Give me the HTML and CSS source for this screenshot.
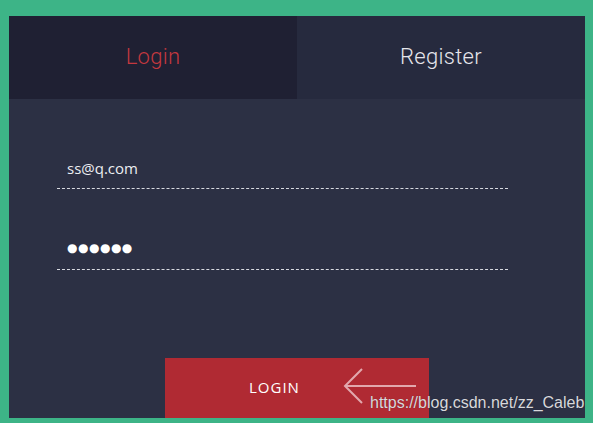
FILE: index.html
```html
<!DOCTYPE html>
<html>
<head>
<meta charset="utf-8">
<link rel="stylesheet" href="styles.css">
</head>
<body>
<div class="panel">
  <div class="tabs">
    <div class="tab tab-active">Login</div>
    <div class="tab">Register</div>
  </div>
  <div class="form">
    <div class="field"><span class="value">ss@q.com</span></div>
    <div class="field field-pass"><span class="dots">●●●●●●</span></div>
    <div class="actions">
      <div class="btn">LOGIN</div>
      <svg class="arrow" width="80" height="40" viewBox="0 0 80 40">
        <path d="M74 20 H3 M20 3 L3 20 L20 37" fill="none" stroke="rgba(235,190,195,0.85)" stroke-width="2"/>
      </svg>
      <div class="watermark">https://blog.csdn.net/zz_Caleb</div>
    </div>
  </div>
</div>
</body>
</html>
```
FILE: styles.css
```css
html, body { margin: 0; padding: 0; }
body {
  width: 593px;
  height: 423px;
  background: #3db487;
  overflow: hidden;
  padding: 16px 0 0 9px;
  box-sizing: border-box;
}
.panel {
  width: 576px;
  height: 402px;
  background: #2c3044;
  display: flex;
  flex-direction: column;
  overflow: hidden;
}
.tabs {
  display: flex;
  flex: 0 0 83px;
}
.tab {
  flex: 0 0 288px;
  display: flex;
  align-items: center;
  justify-content: center;
  background: #262a3e;
  color: #e6e6ec;
  font-family: Roboto, sans-serif;
  font-weight: 300;
  font-size: 22px;
  letter-spacing: 0.3px;
  padding-bottom: 2px;
  box-sizing: border-box;
}
.tab-active {
  background: #1f2033;
  color: #c4383f;
}
.form {
  position: relative;
  flex: 1;
  padding: 0 77px 0 48px;
}
.field {
  height: 28px;
  border-bottom: 1px dashed #d8dae0;
  padding-left: 10px;
  margin-top: 61px;
  font-family: "Open Sans", sans-serif;
  font-size: 15px;
  color: #eceef2;
  line-height: 16px;
}
.field-pass {
  height: 31px;
  margin-top: 49px;
}
.dots {
  font-family: "DejaVu Sans", sans-serif;
  font-size: 12px;
  letter-spacing: 0.5px;
  color: #fff;
}
.actions {
  position: relative;
  margin-top: 88px;
  margin-left: 108px;
}
.btn {
  width: 264px;
  height: 70px;
  background: #b02a33;
  color: #fff;
  font-family: "Open Sans", sans-serif;
  font-size: 15px;
  letter-spacing: 1px;
  line-height: 59px;
  padding-left: 84px;
  box-sizing: border-box;
}
.arrow {
  position: absolute;
  left: 177px;
  top: 8px;
}
.watermark {
  position: absolute;
  left: 205px;
  top: 36px;
  font-family: "Liberation Sans", Arial, sans-serif;
  font-size: 16px;
  color: #d8d8dc;
  white-space: nowrap;
  text-shadow: 0 0 1px rgba(0,0,0,0.3);
}
```
